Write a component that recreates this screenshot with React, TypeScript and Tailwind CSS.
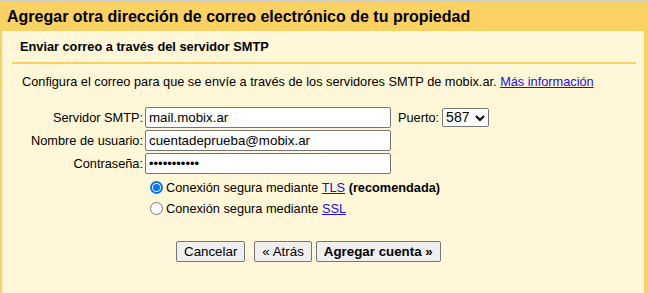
import React from "react";

export default function App() {
  return (
    <div
      className="w-[648px] h-[293px] overflow-hidden bg-[#fad163] border-t-2 border-[#cfcfcf] flex flex-col text-black"
      style={{ fontFamily: '"Liberation Sans", Arial, sans-serif' }}
    >
      <div className="h-[29px] flex items-center pl-[7px] text-[16px] font-bold leading-none">
        Agregar otra dirección de correo electrónico de tu propiedad
      </div>
      <div className="flex-1 ml-[2px] mr-[4px] bg-[#fff7d7] flex flex-col">
        <div className="h-[31px] flex items-center pl-[18px] text-[12.75px] font-bold">
          Enviar correo a través del servidor SMTP
        </div>
        <div className="h-[2px] bg-[#fad163] ml-[10px] mr-[8px]" />
        <div className="pl-[20px] pt-[10px] text-[12.75px] leading-[16px]">
          Configura el correo para que se envíe a través de los servidores SMTP de mobix.ar.{" "}
          <a className="text-[#1a0dee] underline" href="#">Más información</a>
        </div>
        <div className="mt-[17px] grid grid-cols-[141px_246px_auto] gap-x-[2px] gap-y-[2px] text-[12.75px] items-center">
          <label className="text-right leading-[21px]">Servidor SMTP:</label>
          <input
            className="h-[21px] bg-white border border-[#767676] rounded-[2px] px-[3px] text-[13.33px] outline-none"
            defaultValue="mail.mobix.ar"
          />
          <div className="flex items-center pl-[5px]">
            <span>Puerto:</span>
            <div className="ml-[3px] h-[19px] w-[47px] bg-white border border-[#767676] rounded-[2px] flex items-center justify-between px-[3px] text-[14px]">
              <span>587</span>
              <svg width="10" height="8" viewBox="0 0 10 8">
                <path d="M1 2 L5 6 L9 2" stroke="#000" strokeWidth="2" fill="none" />
              </svg>
            </div>
          </div>
          <label className="text-right leading-[21px]">Nombre de usuario:</label>
          <input
            className="h-[21px] bg-white border border-[#767676] rounded-[2px] px-[3px] text-[13.33px] outline-none"
            defaultValue="cuentadeprueba@mobix.ar"
          />
          <div />
          <label className="text-right leading-[21px]">Contraseña:</label>
          <input
            type="password"
            className="h-[21px] bg-white border border-[#767676] rounded-[2px] px-[3px] text-[13px] outline-none"
            defaultValue="12345678901"
          />
          <div />
        </div>
        <div className="ml-[148px] mt-[3px] text-[12.75px] flex flex-col">
          <div className="h-[21px] flex items-center gap-[3px]">
            <span className="w-[13px] h-[13px] rounded-full border-2 border-[#0075ff] flex items-center justify-center">
              <span className="w-[7px] h-[7px] rounded-full bg-[#0075ff]" />
            </span>
            <span>
              Conexión segura mediante <a className="text-[#1a0dee] underline" href="#">TLS</a>{" "}
              <b>(recomendada)</b>
            </span>
          </div>
          <div className="h-[21px] flex items-center gap-[3px]">
            <span className="w-[13px] h-[13px] rounded-full border border-[#767676] bg-white" />
            <span>
              Conexión segura mediante <a className="text-[#1a0dee] underline" href="#">SSL</a>
            </span>
          </div>
        </div>
        <div className="mt-[22px] ml-[174px] flex items-center text-[13.33px]">
          <button className="h-[21px] px-[7px] bg-[#efefef] border border-[#767676] rounded-[2px]">
            Cancelar
          </button>
          <button className="ml-[9px] h-[21px] px-[7px] bg-[#efefef] border border-[#767676] rounded-[2px]">
            « Atrás
          </button>
          <button className="ml-[4px] h-[21px] px-[7px] bg-[#efefef] border border-[#767676] rounded-[2px] font-bold">
            Agregar cuenta »
          </button>
        </div>
      </div>
    </div>
  );
}
